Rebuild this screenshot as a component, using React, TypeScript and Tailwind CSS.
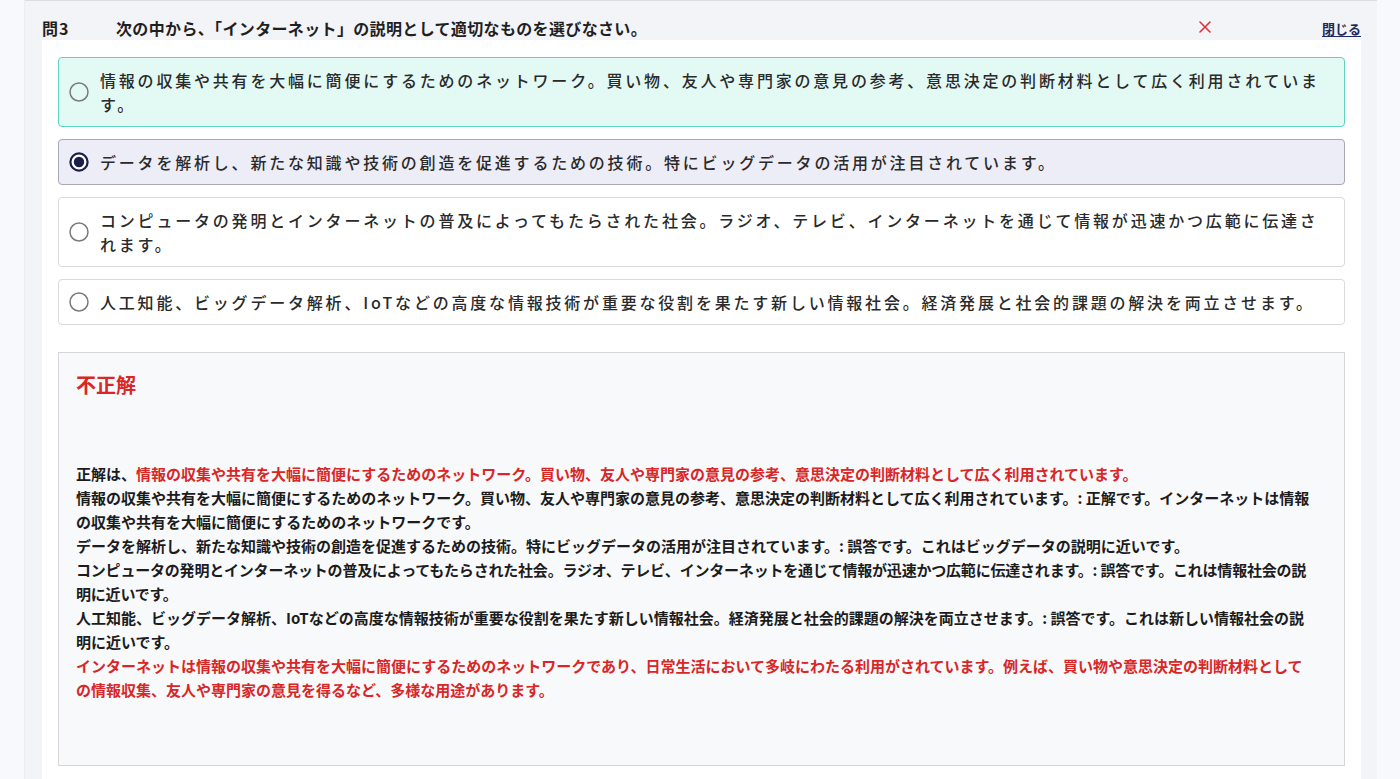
import React from "react";

type Choice = {
  text: string;
  state: "correct" | "selected" | "plain";
};

const choices: Choice[] = [
  {
    text: "情報の収集や共有を大幅に簡便にするためのネットワーク。買い物、友人や専門家の意見の参考、意思決定の判断材料として広く利用されています。",
    state: "correct",
  },
  {
    text: "データを解析し、新たな知識や技術の創造を促進するための技術。特にビッグデータの活用が注目されています。",
    state: "selected",
  },
  {
    text: "コンピュータの発明とインターネットの普及によってもたらされた社会。ラジオ、テレビ、インターネットを通じて情報が迅速かつ広範に伝達されます。",
    state: "plain",
  },
  {
    text: "人工知能、ビッグデータ解析、IoTなどの高度な情報技術が重要な役割を果たす新しい情報社会。経済発展と社会的課題の解決を両立させます。",
    state: "plain",
  },
];

function Radio({ checked }: { checked: boolean }) {
  return (
    <svg width="20" height="20" viewBox="0 0 20 20" className="shrink-0">
      {checked ? (
        <>
          <circle cx="10" cy="10" r="8.6" fill="#ffffff" stroke="#1b1e48" strokeWidth="2.2" />
          <circle cx="10" cy="10" r="5.2" fill="#1b1e48" />
        </>
      ) : (
        <circle cx="10" cy="10" r="9" fill="none" stroke="#7a7a7a" strokeWidth="1.5" />
      )}
    </svg>
  );
}

function ChoiceRow({ choice }: { choice: Choice }) {
  const tone =
    choice.state === "correct"
      ? "bg-[#e3f9f4] border-[#5fd4bf]"
      : choice.state === "selected"
      ? "bg-[#ededf7] border-[#a8a8b4]"
      : "bg-white border-[#dadada]";
  return (
    <label
      className={`flex items-center gap-[11px] rounded-[4px] border pl-[10px] pr-[19px] py-[10px] ${tone}`}
    >
      <Radio checked={choice.state === "selected"} />
      <span className="text-[16px] leading-[24px] tracking-[2.8px] text-[#2a2a2a] font-medium">
        {choice.text}
      </span>
    </label>
  );
}

export default function App() {
  return (
    <div className="w-[1400px] h-[779px] overflow-hidden flex bg-[#f8f9fc] font-['Noto_Sans_CJK_JP','Noto_Sans',sans-serif]">
      <div className="w-[25px] shrink-0 border-r border-[#eceef2]" />
      <div className="w-[1352px] shrink-0 flex flex-col bg-[#f3f4f7] border-t border-[#dcdde1] pl-[17px] pr-[16px]">
        {/* question header */}
        <div className="h-[39px] shrink-0 flex items-center pt-[15px]">
          <span className="w-[74px] text-[16px] leading-[24px] font-bold tracking-[1px] text-[#1f1f1f]">問3</span>
          <span className="text-[16px] leading-[24px] font-bold tracking-[0.35px] text-[#1f1f1f]">
            次の中から、「インターネット」の説明として適切なものを選びなさい。
          </span>
          <span className="ml-auto mr-[111px] mt-[-2px]">
            <svg width="12" height="12" viewBox="0 0 12 12">
              <path d="M1 1 L11 11 M11 1 L1 11" stroke="#e0313a" strokeWidth="1.6" strokeLinecap="round" />
            </svg>
          </span>
          <a className="text-[13px] leading-[18px] font-bold text-[#1e2a5c] underline underline-offset-2 mt-[2px]">
            閉じる
          </a>
        </div>

        {/* answer panel */}
        <div className="flex-1 bg-white px-[16px] pt-[17px]">
          <div className="flex flex-col gap-[12px]">
            {choices.map((c, i) => (
              <ChoiceRow key={i} choice={c} />
            ))}
          </div>

          {/* feedback */}
          <div className="mt-[27px] h-[414px] border border-[#d6d6d8] bg-[#f8f9fb] pl-[17px] pr-[32px] pt-[18px]">
            <div className="text-[20px] leading-[28px] font-bold text-[#d92626]">不正解</div>
            <div className="mt-[63px] text-[15px] leading-[24px] font-bold text-[#1c1c1c]">
              <p>
                正解は、
                <span className="text-[#d92626]">
                  情報の収集や共有を大幅に簡便にするためのネットワーク。買い物、友人や専門家の意見の参考、意思決定の判断材料として広く利用されています。
                </span>
              </p>
              <p>
                情報の収集や共有を大幅に簡便にするためのネットワーク。買い物、友人や専門家の意見の参考、意思決定の判断材料として広く利用されています。: 正解です。インターネットは情報の収集や共有を大幅に簡便にするためのネットワークです。
              </p>
              <p>
                データを解析し、新たな知識や技術の創造を促進するための技術。特にビッグデータの活用が注目されています。: 誤答です。これはビッグデータの説明に近いです。
              </p>
              <p className="tracking-[-0.2px]">
                コンピュータの発明とインターネットの普及によってもたらされた社会。ラジオ、テレビ、インターネットを通じて情報が迅速かつ広範に伝達されます。: 誤答です。これは情報社会の説明に近いです。
              </p>
              <p>
                人工知能、ビッグデータ解析、IoTなどの高度な情報技術が重要な役割を果たす新しい情報社会。経済発展と社会的課題の解決を両立させます。: 誤答です。これは新しい情報社会の説明に近いです。
              </p>
              <p className="text-[#d92626]">
                インターネットは情報の収集や共有を大幅に簡便にするためのネットワークであり、日常生活において多岐にわたる利用がされています。例えば、買い物や意思決定の判断材料としての情報収集、友人や専門家の意見を得るなど、多様な用途があります。
              </p>
            </div>
          </div>
        </div>
      </div>
    </div>
  );
}
